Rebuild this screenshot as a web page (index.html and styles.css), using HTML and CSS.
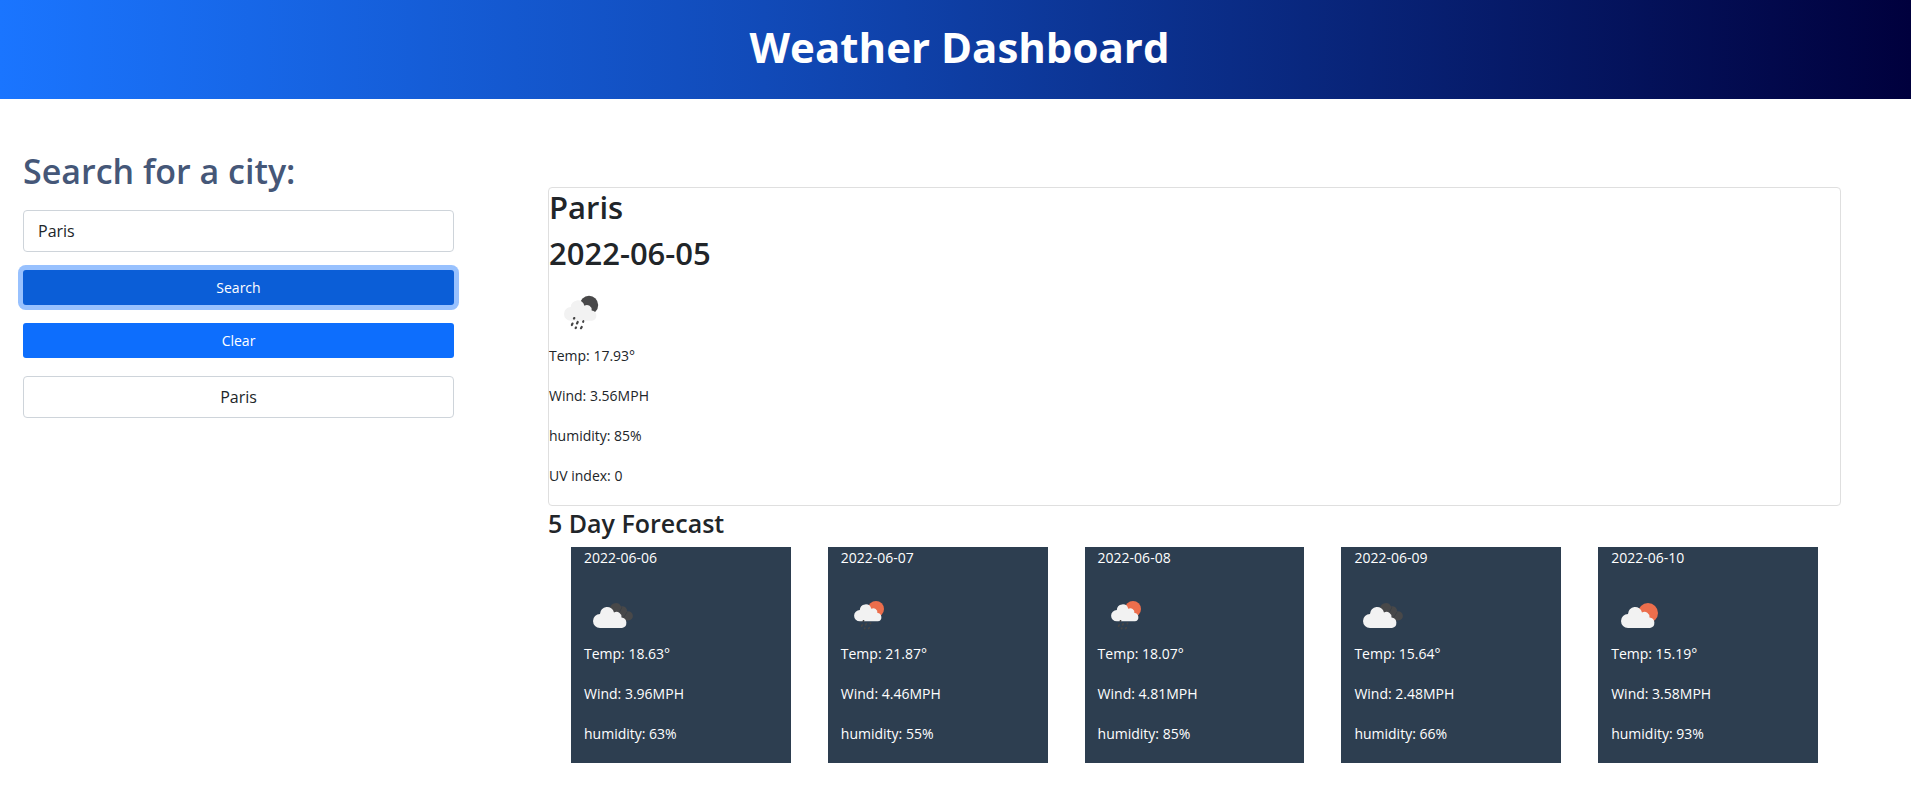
FILE: index.html
```html
<!DOCTYPE html>
<html lang="en">
<head>
<meta charset="utf-8">
<meta name="viewport" content="width=device-width, initial-scale=1">
<title>Weather Dashboard</title>
<link rel="stylesheet" href="styles.css">
</head>
<body>
<svg class="sprite" aria-hidden="true">
  <symbol id="cloud" viewBox="0 0 34 22">
    <path d="M7 22a7 7 0 0 1-7-7a7 7 0 0 1 7-7A7.100 7.100 0 0 1 21 6.500a5 5 0 0 1 7.500 5A5.300 5.300 0 0 1 29 22z" fill="#f2f2f2"/>
  </symbol>
  <symbol id="drops" viewBox="0 0 14 13">
    <path d="M3.800 1l-.3 .6M7.200 5l-.7 1.400M13 4.200l-.3 .6M2 6.600l-.7 1.400M5.500 10.500l-.3 .6M11.200 10l-.7 1.200" fill="none" stroke="#454546" stroke-width="2.200" stroke-linecap="round"/>
  </symbol>
  <symbol id="rain-night" viewBox="0 0 64 64">
    <circle cx="40" cy="25" r="9.200" fill="#484849"/>
    <use href="#cloud" x="15" y="19" width="33" height="22"/>
    <use href="#drops" x="21.500" y="37" width="14" height="13"/>
  </symbol>
  <symbol id="overcast" viewBox="0 0 60 60">
    <path d="M26 23a5.800 5.800 0 0 1 11-1.500a4.500 4.500 0 0 1 6 5a4.600 4.600 0 1 1 1 9H30z" fill="#484849"/>
    <path d="M38 22l-3 6M43 27l-3 5" stroke="#3c4045" stroke-width="1"/>
    <use href="#cloud" x="9" y="21" width="34" height="22"/>
  </symbol>
  <symbol id="rain-day" viewBox="0 0 60 60">
    <circle cx="35" cy="24" r="8" fill="#ec6e4c"/>
    <use href="#cloud" x="13" y="18.500" width="28" height="18"/>
    <use href="#drops" x="19" y="35" width="12" height="10"/>
  </symbol>
  <symbol id="partly" viewBox="0 0 60 60">
    <circle cx="37" cy="28" r="10" fill="#ec6e4c"/>
    <use href="#cloud" x="10" y="21" width="34" height="22"/>
  </symbol>
</svg>

<header class="banner"><h1>Weather Dashboard</h1></header>

<main class="layout">
  <aside class="search">
    <label class="search-title" for="city">Search for a city:</label>
    <input class="field" id="city" type="text" value="Paris">
    <button class="btn btn-active" type="button">Search</button>
    <button class="btn" type="button">Clear</button>
    <button class="field history" type="button">Paris</button>
  </aside>

  <section class="results">
    <article class="current">
      <h2>Paris</h2>
      <h2>2022-06-05</h2>
      <svg class="icon-lg" role="img" aria-label="Rain"><use href="#rain-night"/></svg>
      <p>Temp: 17.93°</p>
      <p>Wind: 3.56MPH</p>
      <p>humidity: 85%</p>
      <p>UV index: 0</p>
    </article>
    <h3 class="forecast-title">5 Day Forecast</h3>
    <div class="forecast">
      <article class="day">
        <p>2022-06-06</p>
        <svg class="icon" role="img" aria-label="Overcast"><use href="#overcast"/></svg>
        <p>Temp: 18.63°</p>
        <p>Wind: 3.96MPH</p>
        <p>humidity: 63%</p>
      </article>
      <article class="day">
        <p>2022-06-07</p>
        <svg class="icon" role="img" aria-label="Rain"><use href="#rain-day"/></svg>
        <p>Temp: 21.87°</p>
        <p>Wind: 4.46MPH</p>
        <p>humidity: 55%</p>
      </article>
      <article class="day">
        <p>2022-06-08</p>
        <svg class="icon" role="img" aria-label="Rain"><use href="#rain-day"/></svg>
        <p>Temp: 18.07°</p>
        <p>Wind: 4.81MPH</p>
        <p>humidity: 85%</p>
      </article>
      <article class="day">
        <p>2022-06-09</p>
        <svg class="icon" role="img" aria-label="Overcast"><use href="#overcast"/></svg>
        <p>Temp: 15.64°</p>
        <p>Wind: 2.48MPH</p>
        <p>humidity: 66%</p>
      </article>
      <article class="day">
        <p>2022-06-10</p>
        <svg class="icon" role="img" aria-label="Partly cloudy"><use href="#partly"/></svg>
        <p>Temp: 15.19°</p>
        <p>Wind: 3.58MPH</p>
        <p>humidity: 93%</p>
      </article>
    </div>
  </section>
</main>
</body>
</html>
```
FILE: styles.css
```css
* { box-sizing: border-box; }

body {
  margin: 0;
  font-family: "Open Sans", "Noto Sans", sans-serif;
  font-size: 14px;
  line-height: 24px;
  color: #212529;
  background: #fff;
}

h1, h2, h3, p { margin: 0; }

.sprite { display: none; }

.banner {
  padding: 19px 0 24px 8px;
  text-align: center;
  color: #fff;
  background: linear-gradient(to right, #1a75ff, #114ab8 40%, #00003d);
}

.banner h1 {
  font-size: 42px;
  line-height: 56px;
  font-weight: 700;
}

.layout {
  display: grid;
  grid-template-columns: minmax(0, 1fr) minmax(0, 3fr);
  gap: 94px;
  padding: 48px 70px 32px 23px;
}

.search {
  display: flex;
  flex-direction: column;
  gap: 18px;
}

.search-title {
  margin-bottom: -3px;
  font-size: 34px;
  line-height: 48px;
  font-weight: 600;
  color: #455778;
}

.field {
  height: 42px;
  padding: 0 14px;
  border: 1px solid #ced4da;
  border-radius: 4px;
  font: inherit;
  font-size: 16px;
  color: #212529;
  background: #fff;
}

.history { text-align: center; }

.btn {
  height: 35px;
  padding: 0 12px;
  border: 0;
  border-radius: 3px;
  font: inherit;
  color: #fff;
  background: #0d6efd;
}

.btn-active {
  background: #0b5ed7;
  box-shadow: 0 0 0 5px #98c1fe;
}

.results { padding-top: 40px; }

.current {
  display: flex;
  flex-direction: column;
  padding-bottom: 1px;
  border: 1px solid #dfdfdf;
  border-radius: 4px;
}

.current h2 {
  margin-bottom: 8px;
  font-size: 31px;
  line-height: 38px;
  font-weight: 600;
}

.current p { margin-bottom: 16px; }

.icon-lg { width: 64px; height: 64px; }

.forecast-title {
  font-size: 25px;
  line-height: 35px;
  font-weight: 600;
  margin-bottom: 6px;
}

.forecast {
  display: grid;
  grid-template-columns: repeat(5, minmax(0, 1fr));
  gap: 37px;
  padding: 0 23px;
}

.day {
  display: flex;
  flex-direction: column;
  gap: 18px;
  padding: 0 13px 18px;
  line-height: 22px;
  color: #fff;
  background: #2d3e50;
}

.icon {
  width: 60px;
  height: 60px;
  margin: -2px 0 -20px;
}
```
